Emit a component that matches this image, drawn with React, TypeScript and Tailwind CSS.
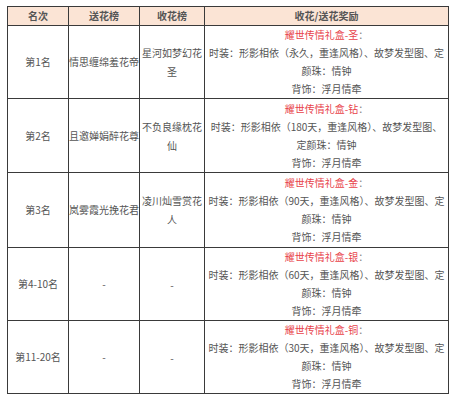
import React from 'react';

type Row = {
  rank: string;
  sender: string;
  receiver: string;
  prize: string;
  lines: string[];
  height: string;
};

const rows: Row[] = [
  {
    rank: '第1名',
    sender: '情思缠绵羞花帝',
    receiver: '星河如梦幻花圣',
    prize: '耀世传情礼盒-圣',
    lines: ['时装：形影相依（永久，重逢风格）、故梦发型图、定', '颜珠：情钟', '背饰：浮月情牵'],
    height: 'h-[72px]',
  },
  {
    rank: '第2名',
    sender: '且邀婵娟醉花尊',
    receiver: '不负良缘枕花仙',
    prize: '耀世传情礼盒-钻',
    lines: ['时装：形影相依（180天，重逢风格）、故梦发型图、', '定颜珠：情钟', '背饰：浮月情牵'],
    height: 'h-[73px]',
  },
  {
    rank: '第3名',
    sender: '岚雾霞光挽花君',
    receiver: '凌川灿雪赏花人',
    prize: '耀世传情礼盒-金',
    lines: ['时装：形影相依（90天，重逢风格）、故梦发型图、定', '颜珠：情钟', '背饰：浮月情牵'],
    height: 'h-[74px]',
  },
  {
    rank: '第4-10名',
    sender: '-',
    receiver: '-',
    prize: '耀世传情礼盒-银',
    lines: ['时装：形影相依（60天，重逢风格）、故梦发型图、定', '颜珠：情钟', '背饰：浮月情牵'],
    height: 'h-[72px]',
  },
  {
    rank: '第11-20名',
    sender: '-',
    receiver: '-',
    prize: '耀世传情礼盒-铜',
    lines: ['时装：形影相依（30天，重逢风格）、故梦发型图、定', '颜珠：情钟', '背饰：浮月情牵'],
    height: 'h-[72px]',
  },
];

const cell = 'bg-white flex items-center justify-center text-center';

const App: React.FC = () => {
  return (
    <div
      className="w-[456px] h-[400px] bg-white pl-[7px] pt-[6px] text-[10px] leading-[18px] text-[#555]"
      style={{ fontFamily: '"Noto Sans CJK SC", "Noto Sans", sans-serif' }}
    >
      <div className="inline-grid grid-cols-[60px_70px_64px_243px] gap-[1px] p-[1px] bg-[#3a3a3a]">
        {/* Header */}
        <div className="h-[18px] bg-[#fbe4d5] flex items-center justify-center font-bold">名次</div>
        <div className="h-[18px] bg-[#fbe4d5] flex items-center justify-center font-bold">送花榜</div>
        <div className="h-[18px] bg-[#fbe4d5] flex items-center justify-center font-bold">收花榜</div>
        <div className="h-[18px] bg-[#fbe4d5] flex items-center justify-center font-bold">收花/送花奖励</div>

        {rows.map((row) => (
          <React.Fragment key={row.rank}>
            <div className={`${cell} ${row.height}`}>{row.rank}</div>
            <div className={`${cell} ${row.height} whitespace-nowrap`}>{row.sender}</div>
            <div className={`${cell} ${row.height} leading-[19px]`}>{row.receiver}</div>
            <div className={`${cell} ${row.height} flex-col`}>
              <div>
                <span className="text-[#e8424a]">{row.prize}</span>
                <span className="text-[#888]">：</span>
              </div>
              {row.lines.map((line) => (
                <div key={line} className="whitespace-nowrap">{line}</div>
              ))}
            </div>
          </React.Fragment>
        ))}
      </div>
    </div>
  );
};

export default App;
